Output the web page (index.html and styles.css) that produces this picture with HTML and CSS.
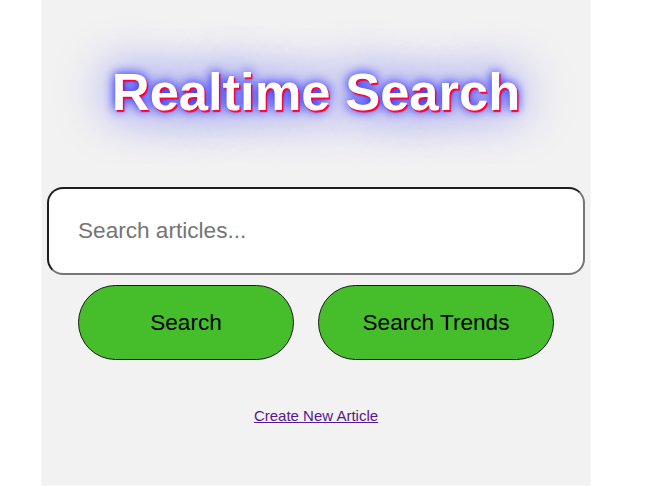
FILE: index.html
```html
<!DOCTYPE html>
<html>
<head>
<meta charset="utf-8">
<link rel="stylesheet" href="styles.css">
</head>
<body>
<div class="panel">
  <h1 class="title">Realtime Search</h1>
  <input class="search-input" type="text" placeholder="Search articles...">
  <div class="actions">
    <button class="btn btn-search">Search</button>
    <button class="btn btn-trends">Search Trends</button>
  </div>
  <div class="link-row">
    <a class="create-link" href="#">Create New Article</a>
  </div>
</div>
</body>
</html>
```
FILE: styles.css
```css
html, body {
  margin: 0;
  padding: 0;
  background: #ffffff;
}
body {
  font-family: "Liberation Sans", Arial, sans-serif;
  font-size: 15px;
}
.panel {
  box-sizing: border-box;
  width: 550px;
  height: 486px;
  margin-left: 41px;
  padding: 62px 5px 0;
  background: #f2f2f2;
  border: 1px solid #f8f8f8;
  border-top: none;
}
.title {
  margin: 0;
  font-size: 52.5px;
  line-height: 60px;
  font-weight: bold;
  text-align: center;
  color: #ffffff;
  text-shadow: 1.5px 1.5px 1px #ff0033, 0 0 1em #0000ff, 0 0 0.2em #0000ff;
}
.search-input {
  display: block;
  box-sizing: border-box;
  width: 100%;
  height: 88px;
  margin-top: 65px;
  padding: 0 29px;
  font-family: "Liberation Sans", Arial, sans-serif;
  font-size: 22.6px;
  background: #ffffff;
  border: 2px solid;
  border-color: #1e1e1e #767676 #767676 #1e1e1e;
  border-radius: 16px;
  outline: none;
}
.search-input::placeholder {
  color: #757575;
}
.actions {
  display: flex;
  justify-content: center;
  gap: 24px;
  margin-top: 10px;
}
.btn {
  box-sizing: border-box;
  height: 75px;
  font-family: "Liberation Sans", Arial, sans-serif;
  font-size: 22.6px;
  color: #000000;
  background: #46be2b;
  border: 1px solid #1a1a1a;
  border-radius: 40px;
  padding: 0;
}
.btn-search {
  width: 216px;
}
.btn-trends {
  width: 236px;
}
.link-row {
  margin-top: 47px;
  text-align: center;
}
.create-link {
  font-size: 15px;
  color: #551a8b;
}
```
